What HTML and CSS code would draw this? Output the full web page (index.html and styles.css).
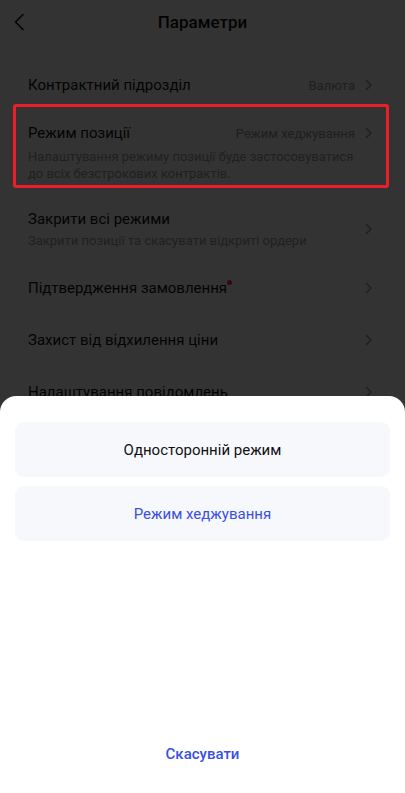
FILE: index.html
```html
<!DOCTYPE html>
<html lang="uk">
<head>
    <meta charset="UTF-8">
    <meta name="viewport" content="width=device-width, initial-scale=1.0">
    <title>Параметри</title>
    <link rel="stylesheet" href="styles.css">
</head>
<body>

    <div class="page">
        <div class="top-bar">
            <svg class="back-icon" width="12" height="18" viewBox="0 0 12 18">
                <path d="M10 1.5 L2.5 9 L10 16.5" fill="none" stroke="#111" stroke-width="1.6" stroke-linecap="round" stroke-linejoin="round"/>
            </svg>
            <h1 class="title">Параметри</h1>
        </div>

        <div class="settings-list">
            <div class="row row-first">
                <span class="row-title">Контрактний підрозділ</span>
                <span class="row-value">Валюта</span>
                <svg class="chevron" width="8" height="12" viewBox="0 0 8 12"><path d="M1.5 1.5 L6 6 L1.5 10.5" fill="none" stroke="#999" stroke-width="1.5" stroke-linecap="round" stroke-linejoin="round"/></svg>
            </div>

            <div class="row row-top">
                <div class="row-body">
                    <div class="row-head">
                        <span class="row-title">Режим позиції</span>
                        <span class="row-value">Режим хеджування</span>
                    </div>
                    <p class="row-desc">Налаштування режиму позиції буде застосовуватися до всіх безстрокових контрактів.</p>
                </div>
                <svg class="chevron" width="8" height="12" viewBox="0 0 8 12"><path d="M1.5 1.5 L6 6 L1.5 10.5" fill="none" stroke="#999" stroke-width="1.5" stroke-linecap="round" stroke-linejoin="round"/></svg>
            </div>

            <div class="row row-two">
                <div class="row-body">
                    <span class="row-title">Закрити всі режими</span>
                    <p class="row-desc small-gap">Закрити позиції та скасувати відкриті ордери</p>
                </div>
                <svg class="chevron" width="8" height="12" viewBox="0 0 8 12"><path d="M1.5 1.5 L6 6 L1.5 10.5" fill="none" stroke="#999" stroke-width="1.5" stroke-linecap="round" stroke-linejoin="round"/></svg>
            </div>

            <div class="row">
                <span class="row-title">Підтвердження замовлення<span class="dot"></span></span>
                <svg class="chevron" width="8" height="12" viewBox="0 0 8 12"><path d="M1.5 1.5 L6 6 L1.5 10.5" fill="none" stroke="#999" stroke-width="1.5" stroke-linecap="round" stroke-linejoin="round"/></svg>
            </div>

            <div class="row">
                <span class="row-title">Захист від відхилення ціни</span>
                <svg class="chevron" width="8" height="12" viewBox="0 0 8 12"><path d="M1.5 1.5 L6 6 L1.5 10.5" fill="none" stroke="#999" stroke-width="1.5" stroke-linecap="round" stroke-linejoin="round"/></svg>
            </div>

            <div class="row">
                <span class="row-title">Налаштування повідомлень</span>
                <svg class="chevron" width="8" height="12" viewBox="0 0 8 12"><path d="M1.5 1.5 L6 6 L1.5 10.5" fill="none" stroke="#999" stroke-width="1.5" stroke-linecap="round" stroke-linejoin="round"/></svg>
            </div>
        </div>
    </div>

    <div class="overlay"></div>

    <div class="highlight"></div>

    <div class="sheet">
        <div class="options">
            <button class="option">Односторонній режим</button>
            <button class="option active">Режим хеджування</button>
        </div>
        <button class="cancel">Скасувати</button>
    </div>

</body>
</html>
```

FILE: styles.css
```css
/* --- загальне --- */
body {
    margin: 0;
    font-family: Roboto, "Noto Sans", sans-serif;
    background: #fff;
    color: #111;
    overflow: hidden;
}

.page {
    height: 793px;
}

.top-bar {
    height: 44px;
    display: flex;
    align-items: center;
    justify-content: center;
    position: relative;
}

.back-icon {
    position: absolute;
    left: 13px;
    top: 13px;
}

.title {
    margin: 0;
    font-size: 17px;
    font-weight: 500;
}

/* --- список налаштувань --- */
.settings-list {
    margin-top: 18px;
    padding: 0 32px 0 28px;
}

.row {
    display: flex;
    align-items: center;
    height: 52px;
    gap: 10px;
}

.row-first {
    height: 46px;
}

.row-top {
    height: auto;
    align-items: flex-start;
    padding: 14px 0;
}

.row-top .chevron {
    margin-top: 5px;
}

.row-two {
    height: auto;
    padding: 12px 0 13px;
}

.row-body {
    flex: 1;
    min-width: 0;
}

.row-head {
    display: flex;
    justify-content: space-between;
    align-items: center;
}

.row-title {
    flex: 1;
    font-size: 15px;
    line-height: 22px;
    position: relative;
}

.row-value {
    font-size: 13px;
    color: #999;
}

.row-desc {
    margin: 4px 0 0;
    font-size: 13px;
    line-height: 17px;
    color: #a0a0a0;
}

.row-desc.small-gap {
    margin-top: 2px;
}

.chevron {
    flex-shrink: 0;
}

.dot {
    display: inline-block;
    width: 5px;
    height: 5px;
    border-radius: 50%;
    background: #f0344a;
    vertical-align: top;
    margin-top: 3px;
}

/* --- затемнення і виділення --- */
.overlay {
    position: fixed;
    inset: 0;
    background: rgba(0, 0, 0, 0.8);
}

.highlight {
    position: fixed;
    left: 13px;
    top: 104px;
    width: 370px;
    height: 78px;
    border: 3px solid #ea1f27;
    border-radius: 3px;
}

/* --- нижня панель --- */
.sheet {
    position: fixed;
    left: 0;
    right: 0;
    bottom: 0;
    height: 397px;
    background: #fff;
    border-radius: 16px 16px 0 0;
    display: flex;
    flex-direction: column;
    justify-content: space-between;
    padding: 26px 15px 27px;
    box-sizing: border-box;
}

.options {
    display: flex;
    flex-direction: column;
    gap: 9px;
}

.option {
    height: 55px;
    border: none;
    border-radius: 9px;
    background: #f7f8fc;
    font-family: Roboto, "Noto Sans", sans-serif;
    font-size: 15px;
    color: #111;
}

.option.active {
    color: #3a4fe4;
}

.cancel {
    border: none;
    background: none;
    font-family: Roboto, "Noto Sans", sans-serif;
    font-size: 15px;
    font-weight: 500;
    line-height: 22px;
    color: #3a4fe4;
}
```
